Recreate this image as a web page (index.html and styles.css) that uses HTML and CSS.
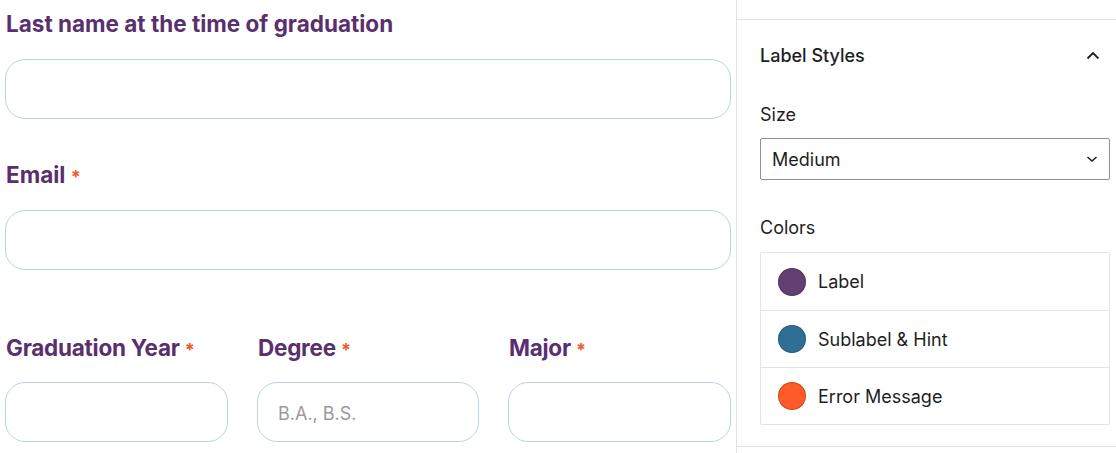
FILE: index.html
```html
<!DOCTYPE html>
<html>
<head>
<meta charset="utf-8">
<link rel="stylesheet" href="styles.css">
</head>
<body>
<div class="page">
  <main class="form">
    <div class="field field-first">
      <label class="flabel">Last name at the time of graduation</label>
      <div class="input"></div>
    </div>
    <div class="field field-email">
      <label class="flabel">Email <span class="req">*</span></label>
      <div class="input"></div>
    </div>
    <div class="row">
      <div class="field">
        <label class="flabel">Graduation Year <span class="req">*</span></label>
        <div class="input"></div>
      </div>
      <div class="field">
        <label class="flabel">Degree <span class="req">*</span></label>
        <div class="input"><span class="ph">B.A., B.S.</span></div>
      </div>
      <div class="field">
        <label class="flabel">Major <span class="req">*</span></label>
        <div class="input"></div>
      </div>
    </div>
  </main>
  <aside class="sidebar">
    <div class="top-strip"></div>
    <section class="panel">
      <div class="panel-head">
        <span class="panel-title">Label Styles</span>
        <svg class="chev-up" width="14" height="9" viewBox="0 0 14 9"><path d="M1.5 7.5 L7 2 L12.5 7.5" fill="none" stroke="#1e1e1e" stroke-width="1.8"/></svg>
      </div>
      <div class="ctl-label">Size</div>
      <div class="select">
        <span>Medium</span>
        <svg class="chev-down" width="12" height="8" viewBox="0 0 12 8"><path d="M1.5 2 L6 6 L10.5 2" fill="none" stroke="#1e1e1e" stroke-width="1.5"/></svg>
      </div>
      <div class="ctl-label colors-label">Colors</div>
      <div class="colors">
        <div class="color-row"><span class="dot dot-label"></span><span>Label</span></div>
        <div class="color-row"><span class="dot dot-sub"></span><span>Sublabel &amp; Hint</span></div>
        <div class="color-row"><span class="dot dot-err"></span><span>Error Message</span></div>
      </div>
    </section>
  </aside>
</div>
</body>
</html>
```
FILE: styles.css
```css
* { box-sizing: border-box; }
html, body { margin: 0; padding: 0; background: #fff; }
body { width: 1116px; height: 453px; overflow: hidden; }
.page { display: flex; height: 453px; }

.form {
  width: 736px;
  padding: 12px 5px 0 5px;
  font-family: Inter, "Liberation Sans", sans-serif;
}
.field { display: flex; flex-direction: column; }
.field-email { margin-top: 44px; }
.flabel {
  display: block;
  height: 24px;
  line-height: 24px;
  font-size: 22.5px;
  font-weight: 700;
  color: #5a2f6e;
  padding-left: 1px;
  margin-bottom: 23px;
  white-space: nowrap;
}
.req { color: #f05a28; font-size: 18px; font-weight: 700; }
.input {
  height: 60px;
  border: 1px solid #b9d3ea;
  border-radius: 20px;
  display: flex;
  align-items: center;
  padding-left: 20px;
}
.ph { color: #9a9a9a; font-size: 18px; padding-top: 2px; }
.row {
  margin-top: 66px;
  display: grid;
  grid-template-columns: 223px 222px 223px;
  column-gap: 29px;
}
.row .flabel { margin-bottom: 22px; letter-spacing: -0.25px; }

.sidebar {
  flex: 1;
  border-left: 1px solid #e2e2e2;
  font-family: Inter, "Liberation Sans", sans-serif;
  color: #1e1e1e;
  font-size: 18px;
}
.top-strip { height: 20px; border-bottom: 1px solid #e2e2e2; }
.panel {
  padding: 0 6px 21px 23px;
  border-bottom: 1px solid #e2e2e2;
}
.panel-head {
  height: 70px;
  display: flex;
  align-items: center;
  justify-content: space-between;
  padding-right: 10px;
}
.panel-title { font-weight: 500; }
.ctl-label { height: 20px; line-height: 20px; margin-top: 15px; margin-bottom: 13px; }
.colors-label { margin-top: 38px; margin-bottom: 14px; }
.select {
  height: 42px;
  border: 1px solid #8c8f94;
  border-radius: 2px;
  display: flex;
  align-items: center;
  justify-content: space-between;
  padding: 0 11px 0 11px;
}
.colors {
  border: 1px solid #e4e4e4;
  border-radius: 2px;
}
.color-row {
  height: 57px;
  display: flex;
  align-items: center;
  padding-left: 17px;
  gap: 12px;
}
.color-row + .color-row { border-top: 1px solid #e4e4e4; }
.dot {
  width: 28px; height: 28px; border-radius: 50%;
  border: 1px solid rgba(0,0,0,0.2);
}
.dot-label { background: #633f72; }
.dot-sub { background: #2f6f96; }
.dot-err { background: #fd5c28; }
```
